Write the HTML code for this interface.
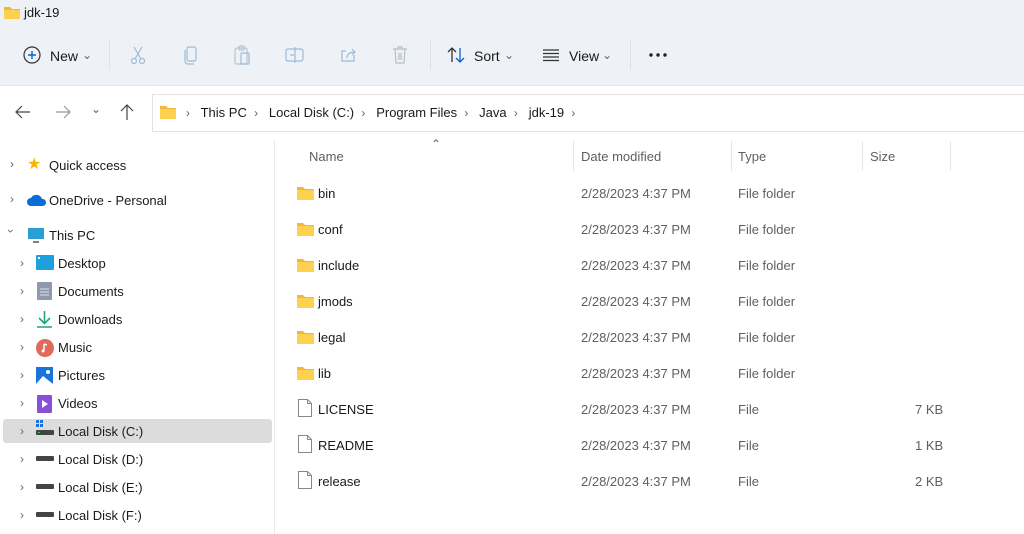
<!DOCTYPE html>
<html><head><meta charset="utf-8"><style>
*{margin:0;padding:0;box-sizing:border-box}
body{width:1024px;height:534px;overflow:hidden;background:#fff;font-family:"Liberation Sans",sans-serif;font-size:13px;color:#1a1a1a;position:relative}
.a{position:absolute;white-space:nowrap}
.top{position:absolute;left:0;top:0;width:1024px;height:86px;background:#eef1f6;border-bottom:1px solid #e1e4e9}
.g{color:#5f5f5f}
.chev{color:#666;font-size:12px}
.sep{position:absolute;width:1px;background:#dfe2e6}
svg{position:absolute}
</style></head><body>
<div class="top"></div>
<svg style="left:4px;top:5px" width="16" height="14" viewBox="0 0 16 14"><path d="M0 2h6l2 2h8v10H0z" fill="#f4b63a"/><path d="M0 5h16v9H0z" fill="#fdd14f"/></svg>
<div class="a" style="left:24px;top:5px;font-size:13px">jdk-19</div>

<svg style="left:23px;top:46px" width="18" height="18" viewBox="0 0 18 18"><circle cx="9" cy="9" r="8" fill="none" stroke="#333" stroke-width="1.2"/><path d="M9 5v8M5 9h8" stroke="#0a63c9" stroke-width="1.4"/></svg>
<div class="a" style="left:50px;top:48px;font-size:14px">New</div><div class="a chev" style="left:82px;top:48px">⌄</div>
<div class="sep" style="left:109px;top:40px;height:30px"></div>
<svg style="left:128px;top:45px" width="20" height="20" viewBox="0 0 20 20" fill="none" stroke="#9dbbd9" stroke-width="1.2"><circle cx="6" cy="16" r="2.5"/><circle cx="14" cy="16" r="2.5"/><path d="M7 14L14 2M13 14L6 2"/></svg>
<svg style="left:182px;top:45px" width="18" height="20" viewBox="0 0 18 20" fill="none" stroke="#9dbbd9" stroke-width="1.2"><rect x="5" y="2" width="9" height="14" rx="2"/><path d="M3 5v11a3 3 0 0 0 3 3h6"/></svg>
<svg style="left:233px;top:44px" width="18" height="22" viewBox="0 0 18 22" fill="none" stroke="#b5c3d1" stroke-width="1.2"><rect x="2" y="4" width="12" height="16" rx="2"/><rect x="6" y="2" width="5" height="4" rx="1"/><rect x="8" y="9" width="8" height="11" rx="1" stroke="#9dbbd9"/></svg>
<svg style="left:284px;top:46px" width="22" height="18" viewBox="0 0 22 18" fill="none" stroke="#9dbbd9" stroke-width="1.2"><rect x="2" y="3" width="17" height="12" rx="2"/><path d="M11 1v16M6 9h4"/></svg>
<svg style="left:339px;top:46px" width="20" height="18" viewBox="0 0 20 18" fill="none" stroke="#9dbbd9" stroke-width="1.2"><path d="M15 9v6H3V5h4"/><path d="M8 12c0-4 3-6 8-6M13 3l3 3-3 3"/></svg>
<svg style="left:392px;top:45px" width="16" height="20" viewBox="0 0 16 20" fill="none" stroke="#b5bec8" stroke-width="1.2"><path d="M1 4h14M6 4V2h4v2M3 4l1 14h8l1-14M7 8v7M9 8v7"/></svg>
<div class="sep" style="left:430px;top:40px;height:30px"></div>
<svg style="left:446px;top:45px" width="20" height="20" viewBox="0 0 20 20" fill="none" stroke-width="1.3"><path d="M6 17V3M2 7l4-4 4 4" stroke="#333"/><path d="M14 3v14M10 13l4 4 4-4" stroke="#0a63c9"/></svg>
<div class="a" style="left:474px;top:48px;font-size:14px">Sort</div><div class="a chev" style="left:504px;top:48px">⌄</div>
<svg style="left:542px;top:48px" width="18" height="14" viewBox="0 0 18 14" stroke="#333" stroke-width="1.2"><path d="M1 2h16M1 5.5h16M1 9h16M1 12.5h16"/></svg>
<div class="a" style="left:569px;top:48px;font-size:14px">View</div><div class="a chev" style="left:602px;top:48px">⌄</div>
<div class="sep" style="left:630px;top:40px;height:30px"></div>
<svg style="left:649px;top:53px" width="20" height="4"><circle cx="2" cy="2" r="1.7" fill="#222"/><circle cx="9" cy="2" r="1.7" fill="#222"/><circle cx="16" cy="2" r="1.7" fill="#222"/></svg>

<svg style="left:14px;top:104px" width="18" height="16" viewBox="0 0 18 16" fill="none" stroke="#444" stroke-width="1.2"><path d="M16 8H2M8 2L2 8l6 6"/></svg>
<svg style="left:54px;top:104px" width="18" height="16" viewBox="0 0 18 16" fill="none" stroke="#999" stroke-width="1.2"><path d="M2 8h14M10 2l6 6-6 6"/></svg>
<div class="a chev" style="left:91px;top:102px">⌄</div>
<svg style="left:118px;top:103px" width="18" height="18" viewBox="0 0 18 18" fill="none" stroke="#444" stroke-width="1.2"><path d="M9 17V2M3 8l6-6 6 6"/></svg>
<div style="position:absolute;left:152px;top:94px;width:880px;height:38px;border:1px solid #e3e3e3;background:#fff"></div>
<svg style="left:160px;top:105px" width="16" height="14" viewBox="0 0 16 14"><path d="M0 1h6l2 2h8v11H0z" fill="#f4b63a"/><path d="M0 4h16v10H0z" fill="#fdd14f"/></svg>
<div class="a" style="left:186px;top:105px"><span class="chev">›</span>&nbsp;&nbsp; This PC &nbsp;<span class="chev">›</span>&nbsp;&nbsp; Local Disk (C:) &nbsp;<span class="chev">›</span>&nbsp;&nbsp; Program Files &nbsp;<span class="chev">›</span>&nbsp;&nbsp; Java &nbsp;<span class="chev">›</span>&nbsp;&nbsp; jdk-19 &nbsp;<span class="chev">›</span></div>

<div class="sep" style="left:274px;top:140px;height:394px;background:#eaeaea"></div>
<div style="position:absolute;left:3px;top:419px;width:269px;height:24px;background:#dcdcdc;border-radius:3px"></div>
<div class="a chev" style="left:10px;top:157px">›</div><div class="a" style="left:27px;top:157px;color:#f5b800;font-size:16px;line-height:16px">★</div><div class="a" style="left:49px;top:158px">Quick access</div>
<div class="a chev" style="left:10px;top:192px">›</div><svg style="left:27px;top:194px" width="20" height="12" viewBox="0 0 20 12"><path d="M4 12a4 4 0 0 1 0-8 6 6 0 0 1 11 1 3.5 3.5 0 0 1 1 7z" fill="#0a6cd6"/></svg><div class="a" style="left:49px;top:193px">OneDrive - Personal</div>
<div class="a chev" style="left:9px;top:224px;transform:rotate(90deg)">›</div><svg style="left:28px;top:228px" width="16" height="15" viewBox="0 0 16 15"><rect x="0" y="0" width="16" height="11" fill="#2a9fd6"/><path d="M5 14h6" stroke="#555" stroke-width="1.5"/></svg><div class="a" style="left:49px;top:228px">This PC</div>
<div class="a chev" style="left:20px;top:256px">›</div><svg style="left:36px;top:255px" width="18" height="15"><rect width="18" height="15" rx="1" fill="#1da1dc"/><rect x="2" y="2" width="2" height="2" fill="#fff"/></svg><div class="a" style="left:58px;top:256px">Desktop</div>
<div class="a chev" style="left:20px;top:284px">›</div><svg style="left:37px;top:282px" width="15" height="18"><rect width="15" height="18" rx="1" fill="#8e9aab"/><path d="M3 7h9M3 10h9M3 13h9" stroke="#dde" /></svg><div class="a" style="left:58px;top:284px">Documents</div>
<div class="a chev" style="left:20px;top:312px">›</div><svg style="left:36px;top:310px" width="17" height="18" fill="none" stroke="#1fa67a" stroke-width="1.6"><path d="M8.5 1v12M3 8l5.5 5.5L14 8M1 17h15"/></svg><div class="a" style="left:58px;top:312px">Downloads</div>
<div class="a chev" style="left:20px;top:340px">›</div><svg style="left:36px;top:339px" width="18" height="18"><circle cx="9" cy="9" r="9" fill="#e06b5a"/><path d="M8 5v7M8 5l3 1" stroke="#fff" stroke-width="1.5"/><circle cx="7" cy="12" r="1.5" fill="#fff"/></svg><div class="a" style="left:58px;top:340px">Music</div>
<div class="a chev" style="left:20px;top:368px">›</div><svg style="left:36px;top:367px" width="17" height="17"><rect width="17" height="17" fill="#1a73d9"/><path d="M0 17l7-8 10 8z" fill="#fff"/><circle cx="12" cy="5" r="2" fill="#fff"/></svg><div class="a" style="left:58px;top:368px">Pictures</div>
<div class="a chev" style="left:20px;top:396px">›</div><svg style="left:37px;top:395px" width="15" height="18"><rect width="15" height="18" rx="1" fill="#8a4fd9"/><path d="M5 5v8l6-4z" fill="#fff"/></svg><div class="a" style="left:58px;top:396px">Videos</div>
<div class="a chev" style="left:20px;top:424px">›</div><svg style="left:36px;top:420px" width="18" height="18"><rect x="0" y="0" width="3" height="3" fill="#1a73d9"/><rect x="4" y="0" width="3" height="3" fill="#1a73d9"/><rect x="0" y="4" width="3" height="3" fill="#1a73d9"/><rect x="4" y="4" width="3" height="3" fill="#1a73d9"/><rect x="0" y="10" width="18" height="5" rx="1" fill="#444"/><rect x="2" y="12" width="2" height="1" fill="#3c3"/></svg><div class="a" style="left:58px;top:424px">Local Disk (C:)</div>
<div class="a chev" style="left:20px;top:452px">›</div><svg style="left:36px;top:456px" width="18" height="6"><rect width="18" height="5" rx="1" fill="#444"/></svg><div class="a" style="left:58px;top:452px">Local Disk (D:)</div>
<div class="a chev" style="left:20px;top:480px">›</div><svg style="left:36px;top:484px" width="18" height="6"><rect width="18" height="5" rx="1" fill="#444"/></svg><div class="a" style="left:58px;top:480px">Local Disk (E:)</div>
<div class="a chev" style="left:20px;top:508px">›</div><svg style="left:36px;top:512px" width="18" height="6"><rect width="18" height="5" rx="1" fill="#444"/></svg><div class="a" style="left:58px;top:508px">Local Disk (F:)</div>

<div class="a chev" style="left:431px;top:137px">⌃</div>
<div class="a g" style="left:309px;top:149px">Name</div>
<div class="sep" style="left:573px;top:141px;height:30px;background:#e5e5e5"></div>
<div class="a g" style="left:581px;top:149px">Date modified</div>
<div class="sep" style="left:731px;top:141px;height:30px;background:#e5e5e5"></div>
<div class="a g" style="left:738px;top:149px">Type</div>
<div class="sep" style="left:862px;top:141px;height:30px;background:#e5e5e5"></div>
<div class="a g" style="left:870px;top:149px">Size</div>
<div class="sep" style="left:950px;top:141px;height:30px;background:#e5e5e5"></div>

<div id="rows"></div>
<script>
var r=[["bin",1],["conf",1],["include",1],["jmods",1],["legal",1],["lib",1],["LICENSE",0,"7 KB"],["README",0,"1 KB"],["release",0,"2 KB"]],h="";
r.forEach(function(e,i){var y=186+i*36;
h+=e[1]?'<svg style="left:297px;top:'+(y)+'px" width="17" height="14" viewBox="0 0 17 14"><path d="M0 1h6l2 2h9v11H0z" fill="#f4b63a"/><path d="M0 4h17v10H0z" fill="#fdd14f"/></svg>':'<svg style="left:298px;top:'+(y-3)+'px" width="14" height="18" viewBox="0 0 14 18" fill="#fff" stroke="#888"><path d="M.5 .5h9l4 4v13H.5z"/><path d="M9.5 .5v4h4" fill="none"/></svg>';
h+='<div class="a" style="left:318px;top:'+y+'px">'+e[0]+'</div><div class="a g" style="left:581px;top:'+y+'px">2/28/2023 4:37 PM</div><div class="a g" style="left:738px;top:'+y+'px">'+(e[1]?"File folder":"File")+'</div>';
if(e[2])h+='<div class="a g" style="left:915px;top:'+y+'px">'+e[2]+'</div>';});
document.getElementById("rows").outerHTML=h;
</script>
</body></html>
